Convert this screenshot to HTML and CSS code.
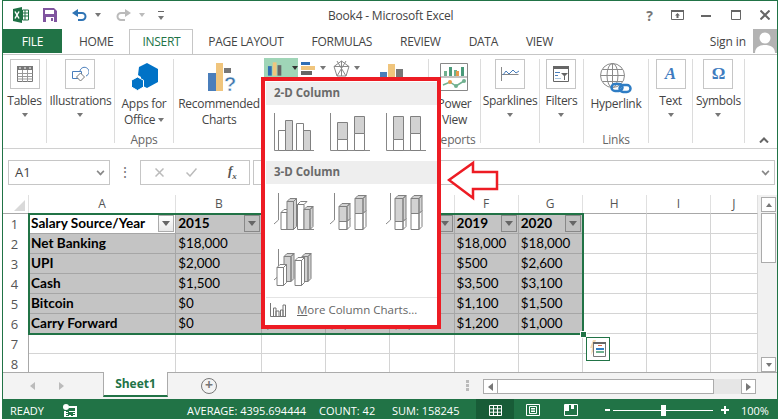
FILE: index.html
```html
<!DOCTYPE html>
<html lang="en">
<head>
    <meta charset="UTF-8">
    <title>Book4 - Microsoft Excel</title>
    <link rel="stylesheet" href="styles.css">
</head>
<body>
<div class="window">

    <!-- title bar -->
    <div class="titlebar">
        <div class="qat">
            <svg class="qat-excel" width="16" height="16" viewBox="0 0 16 16"><path fill="#1e7145" d="M0 2 9 0v16L0 14z"/><path fill="#fff" stroke="#1e7145" d="M9.500 3h6v10h-6z"/><path stroke="#1e7145" d="M12 3v10M9.500 6h6M9.500 9h6"/><path fill="none" stroke="#fff" stroke-width="1.500" d="m2 4.500 4 7m0-7-4 7"/></svg>
            <svg class="qat-save" width="14" height="14" viewBox="0 0 14 14"><path fill="#80559f" d="M0 0h11l3 3v11H0z"/><path fill="#fff" d="M2 2h9v4H2zM3 9h8v5H3z"/><path fill="#80559f" d="M8 10h2v3H8z"/></svg>
            <svg class="qat-undo" width="15" height="13" viewBox="0 0 15 13"><path fill="none" stroke="#2f74b5" stroke-width="2" d="M2 4h8a3.500 3.500 0 0 1 0 7H6"/><path fill="#2f74b5" d="M6 0v8L0 4z"/></svg>
            <span class="caret qat-caret"></span>
            <svg class="qat-redo" width="15" height="13" viewBox="0 0 15 13"><path fill="none" stroke="#bbb" stroke-width="2" d="M13 4H5a3.500 3.500 0 0 0 0 7h4"/><path fill="#bbb" d="M9 0v8l6-4z"/></svg>
            <span class="caret qat-caret light"></span>
            <span class="qat-custom"><span class="caret"></span></span>
        </div>
        <div class="title">Book4 - Microsoft Excel</div>
        <div class="wincontrols">
            <span class="help">?</span>
            <svg width="13" height="10" viewBox="0 0 13 10"><path fill="none" stroke="#666" d="M.5.500h12v9H.500z"/><path fill="#666" d="M0 0h13v2H0zM6.500 3 9 5.500H7.500V8h-2V5.500H4z"/></svg>
            <svg class="wc-min" width="10" height="10" viewBox="0 0 10 10"><path fill="#666" d="M0 5h10v2H0z"/></svg>
            <svg class="wc-max" width="10" height="10" viewBox="0 0 10 10"><path fill="none" stroke="#666" d="M.5.500h9v9h-9z"/><path fill="#666" d="M0 0h10v2H0z"/></svg>
            <svg class="wc-close" width="10" height="10" viewBox="0 0 10 10"><path stroke="#666" stroke-width="2" d="m.5.500 9 9m0-9-9 9"/></svg>
        </div>
    </div>

    <!-- tabs -->
    <div class="tabs">
        <div class="tab file">FILE</div>
        <div class="tab home">HOME</div>
        <div class="tab active">INSERT</div>
        <div class="tab">PAGE LAYOUT</div>
        <div class="tab">FORMULAS</div>
        <div class="tab">REVIEW</div>
        <div class="tab">DATA</div>
        <div class="tab">VIEW</div>
        <div class="signin">Sign in</div>
        <svg class="avatar" width="24" height="24" viewBox="0 0 24 24"><path fill="#b3b3b3" d="M0 0h24v24H0z"/><circle cx="12" cy="9" r="5.500" fill="#fff"/><path fill="#fff" d="M2 24c0-6 5-8 10-8s10 2 10 8z"/></svg>
    </div>

    <!-- ribbon -->
    <div class="ribbon">
        <div class="group w-44">
            <div class="gitems">
                <div class="rbtn">
                    <div class="rbox"><svg width="16" height="16" viewBox="0 0 16 16"><path fill="#fff" stroke="#777" d="M.5.500h15v15H.500z"/><path fill="#777" d="M0 0h16v4H0z"/><path stroke="#999" d="M.5 7.500h15M.5 10.500h15M.5 13h15M5.500 4v12M10.500 4v12"/><path fill="#fff" d="M2 1.500h2v1H2zM7 1.500h2v1H7zM12 1.500h2v1h-2z"/></svg></div>
                    <div class="rlabel">Tables</div>
                    <span class="caret"></span>
                </div>
            </div>
        </div>
        <div class="group w-68">
            <div class="gitems">
                <div class="rbtn">
                    <div class="rbox"><svg width="17" height="16" viewBox="0 0 17 16"><path fill="none" stroke="#4a7ebb" d="M.5 5.500h9v7h-9z"/><path fill="#fff" stroke="#777" d="m8.500 7 4 4-4 4-4-4z"/><path fill="none" stroke="#4a7ebb" d="M8 5a4.500 4.500 0 1 1 6 5"/></svg></div>
                    <div class="rlabel">Illustrations</div>
                    <span class="caret"></span>
                </div>
            </div>
        </div>
        <div class="group w-59">
            <div class="gitems">
                <div class="rbtn tall">
                    <svg class="ic-28" width="27" height="28" viewBox="0 0 27 28"><path fill="#0072c6" d="m16 0 11 6v13l-11 6-6-3v-8l-3-2 1-8z"/><path fill="#0072c6" stroke="#fff" d="m6.500 14 6 3.200v6.800l-6 3.500-6-3.500v-6.800z"/></svg>
                    <div class="rlabel">Apps for<br>Office <span class="caret inline"></span></div>
                </div>
            </div>
            <div class="gname">Apps</div>
        </div>
        <div class="group w-255">
            <div class="gitems">
                <div class="rbtn tall recommended">
                    <svg class="ic-rec" width="30" height="30" viewBox="0 0 30 30"><path fill="#4a7ebb" d="M0 10h8v18H0z"/><path fill="#f0c57d" d="M8 0h7v28H8z"/><path fill="#777" d="M16 5h7v5h-7z"/><text class="qmark" x="16" y="28">?</text></svg>
                    <div class="rlabel">Recommended<br>Charts</div>
                </div>
                <div class="gallery">
                    <div class="gal-item picked">
                        <svg width="22" height="15" viewBox="0 0 22 15"><path fill="#2f6eb5" d="M1 5h4v10H1z"/><path fill="#f0c57d" d="M6 1h4v14H6z"/><path fill="#666" d="M11 4h4v11h-4z"/></svg>
                        <span class="caret dark"></span>
                    </div>
                    <div class="gal-item bars">
                        <svg width="15" height="15" viewBox="0 0 15 15"><path fill="#2f6eb5" d="M0 1h9v3H0z"/><path fill="#f0c57d" d="M0 5h14v4H0z"/><path fill="#666" d="M0 10h11v4H0z"/></svg>
                        <span class="caret"></span>
                    </div>
                    <div class="gal-item radar">
                        <svg width="17" height="17" viewBox="0 0 17 17"><path fill="none" stroke="#888" d="m8.500 1 7.500 5.500-3 9.500H4L1 6.500zM8.500 1v15M1 6.500 16 6.500M4 16 13 1M13 16 4 1"/></svg>
                        <span class="caret"></span>
                    </div>
                    <div class="gal-item combo">
                        <svg width="24" height="20" viewBox="0 0 24 20"><path fill="#4a7ebb" d="M0 8h7v12H0z"/><path fill="#f0c57d" d="M8 0h7v20H8z"/><path fill="#777" d="M16 5h7v15h-7z"/></svg>
                    </div>
                </div>
            </div>
        </div>
        <div class="group w-52">
            <div class="gitems">
                <div class="rbtn tall">
                    <svg class="ic-28" width="28" height="28" viewBox="0 0 28 28"><path fill="#fff" stroke="#888" d="M.5.500h27v27H.500zM.5 14h27"/><path fill="#6fb08f" d="M4 8h3v5H4zM14 7h3v6h-3z"/><path fill="#4a9a7a" d="M9 4h3v9H9zM21 4h3v9h-3z"/><path fill="#e89a4c" d="M16 8h3v5h-3z"/><path fill="none" stroke="#6fb08f" stroke-width="1.500" d="m3 22 7-3 6 4 8-5"/><circle cx="10" cy="19" r="2" fill="#e89a4c"/><circle cx="16" cy="23" r="2" fill="#6fb08f"/><circle cx="24" cy="18" r="2" fill="#6fb08f"/></svg>
                    <div class="rlabel">Power<br>View</div>
                </div>
            </div>
            <div class="gname">Reports</div>
        </div>
        <div class="group w-59">
            <div class="gitems">
                <div class="rbtn">
                    <div class="rbox"><svg width="18" height="14" viewBox="0 0 18 14"><path fill="none" stroke="#888" d="M.5 0v14M.5 7.500h17"/><path fill="none" stroke="#4a7ebb" d="m2 8 3-4 3 3 4-4 3 3 3-2"/></svg></div>
                    <div class="rlabel">Sparklines</div>
                    <span class="caret"></span>
                </div>
            </div>
        </div>
        <div class="group w-44">
            <div class="gitems">
                <div class="rbtn">
                    <div class="rbox"><svg width="16" height="16" viewBox="0 0 16 16"><path fill="#fff" stroke="#666" d="M.5.500h15v15H.500z"/><path fill="#666" d="M0 0h16v3H0zM8 7h7l-3 3v4h-1v-4z"/><path fill="#4a7ebb" d="M2 6h5v1H2zM2 9h3v1H2z"/><path fill="#a8c6e0" d="M2 12h6v1H2z"/></svg></div>
                    <div class="rlabel">Filters</div>
                    <span class="caret"></span>
                </div>
            </div>
        </div>
        <div class="group w-65">
            <div class="gitems">
                <div class="rbtn tall">
                    <svg width="32" height="31" viewBox="0 0 32 31"><g fill="none" stroke="#8a8a8a"><circle cx="12.500" cy="12.500" r="12"/><ellipse cx="12.500" cy="12.500" rx="5.500" ry="12"/><path d="M12.500.5v24M.5 12.500h24M2.500 6.500h20M2.500 18.500h20"/></g><g fill="none" stroke="#2f7dc4" stroke-width="2.500"><rect x="11.500" y="21" width="11" height="7" rx="3.500"/><rect x="19.500" y="22" width="11" height="7" rx="3.500"/></g></svg>
                    <div class="rlabel">Hyperlink</div>
                </div>
            </div>
            <div class="gname">Links</div>
        </div>
        <div class="group w-44">
            <div class="gitems">
                <div class="rbtn">
                    <div class="rbox"><span class="rbox-text">A</span></div>
                    <div class="rlabel">Text</div>
                    <span class="caret"></span>
                </div>
            </div>
        </div>
        <div class="group w-52">
            <div class="gitems">
                <div class="rbtn">
                    <div class="rbox"><span class="rbox-omega">Ω</span></div>
                    <div class="rlabel">Symbols</div>
                    <span class="caret"></span>
                </div>
            </div>
        </div>
        <svg class="collapse" width="10" height="6" viewBox="0 0 10 6"><path fill="none" stroke="#666" stroke-width="2" d="m1 5.500 4-4 4 4"/></svg>
    </div>

    <!-- formula bar -->
    <div class="formulabar">
        <div class="namebox">A1<span class="chev"></span></div>
        <div class="fdots">⋮</div>
        <div class="fbuttons">
            <svg width="9" height="9" viewBox="0 0 9 9"><path stroke="#bbb" stroke-width="1.500" d="m.5.500 8 8m0-8-8 8"/></svg>
            <svg width="11" height="9" viewBox="0 0 11 9"><path fill="none" stroke="#bbb" stroke-width="1.500" d="m.5 4.500 3.500 3.500 6.500-7.500"/></svg>
            <span class="fx">f<sub>x</sub></span>
        </div>
        <div class="finput"><span class="chev"></span></div>
    </div>

    <!-- sheet -->
    <div class="sheetarea">
        <div class="sheetwrap">
            <table class="sheet">
                <colgroup>
                    <col class="c-head"><col class="c-a"><col class="c-b"><col class="c-n"><col class="c-n"><col class="c-n"><col class="c-n"><col class="c-n"><col class="c-n"><col class="c-n"><col class="c-j">
                </colgroup>
                <tr class="hdr"><th class="corner"><span class="tri"></span></th><th>A</th><th>B</th><th></th><th></th><th></th><th>F</th><th>G</th><th>H</th><th>I</th><th>J</th></tr>
                <tr>
                    <th>1</th>
                    <td class="active-cell b">Salary Source/Year<span class="filter light"></span></td>
                    <td class="s b">2015<span class="filter"></span></td>
                    <td class="s b"></td>
                    <td class="s b"></td>
                    <td class="s b"><span class="filter"></span></td>
                    <td class="s b">2019<span class="filter"></span></td>
                    <td class="s b">2020<span class="filter"></span></td>
                    <td></td><td></td><td></td>
                </tr>
                <tr><th>2</th><td class="s b">Net Banking</td><td class="s">$18,000</td><td class="s"></td><td class="s"></td><td class="s"></td><td class="s">$18,000</td><td class="s">$18,000</td><td></td><td></td><td></td></tr>
                <tr><th>3</th><td class="s b">UPI</td><td class="s">$2,000</td><td class="s"></td><td class="s"></td><td class="s"></td><td class="s">$500</td><td class="s">$2,600</td><td></td><td></td><td></td></tr>
                <tr><th>4</th><td class="s b">Cash</td><td class="s">$1,500</td><td class="s"></td><td class="s"></td><td class="s"></td><td class="s">$3,500</td><td class="s">$3,100</td><td></td><td></td><td></td></tr>
                <tr><th>5</th><td class="s b">Bitcoin</td><td class="s">$0</td><td class="s"></td><td class="s"></td><td class="s"></td><td class="s">$1,100</td><td class="s">$1,500</td><td></td><td></td><td></td></tr>
                <tr><th>6</th><td class="s b">Carry Forward</td><td class="s">$0</td><td class="s">$0</td><td class="s">$1,000</td><td class="s">$1,300</td><td class="s">$1,200</td><td class="s">$1,000</td><td></td><td></td><td></td></tr>
                <tr><th>7</th><td></td><td></td><td></td><td></td><td></td><td></td><td></td><td></td><td></td><td></td></tr>
                <tr><th>8</th><td></td><td></td><td></td><td></td><td></td><td></td><td></td><td></td><td></td><td></td></tr>
            </table>
            <div class="range"><span class="handle"></span></div>
            <div class="quick">
                <svg width="20" height="20" viewBox="0 0 20 20"><path fill="#f5d9b0" d="M5 1h3L6 7h2l-5 9 1-7H2z"/><path fill="#fff" stroke="#777" d="M5.500 3.500h12v14h-12z"/><path fill="#666" d="M5 3h13v2H5z"/><path fill="#d9694a" d="M10 6h4v1h-4z"/><path fill="#2f7dc4" d="M8 9h8v2H8z"/><path fill="#6fb08f" d="M8 12h8v2H8z"/></svg>
            </div>
        </div>
        <div class="vscroll">
            <div class="sb-btn"><span class="caret up"></span></div>
            <div class="sb-thumb"></div>
            <div class="sb-rest"></div>
            <div class="sb-btn"><span class="caret"></span></div>
        </div>
    </div>

    <!-- sheet tabs -->
    <div class="sheetbar">
        <span class="nav-l"></span>
        <span class="nav-r"></span>
        <div class="sheettab">Sheet1</div>
        <div class="addsheet">+</div>
        <div class="hdots"></div>
        <div class="hscroll">
            <div class="hs-btn"><span class="tri-l"></span></div>
            <div class="hs-thumb"></div>
            <div class="hs-rest"></div>
            <div class="hs-btn"><span class="tri-r"></span></div>
        </div>
    </div>

    <!-- status bar -->
    <div class="statusbar">
        <span class="st-ready">READY</span>
        <svg class="st-macro" width="14" height="13" viewBox="0 0 14 13"><circle cx="3" cy="3" r="3" fill="#fff"/><path fill="#fff" d="M6 2h8v11H1V7h2v1h2v1H3v1h2v1H3v1h1h2v-1h2v1h2v-1h2v-1h-2V9h2V8H6V7h6V4H6z"/></svg>
        <span class="st-avg">AVERAGE: 4395.694444</span>
        <span class="st-count">COUNT: 42</span>
        <span class="st-sum">SUM: 158245</span>
        <div class="st-view current"><svg width="13" height="11" viewBox="0 0 13 11"><path fill="none" stroke="#fff" d="M.5.500h12v10H.500zM.5 3.800h12M.5 7.200h12M4.500.5v10M8.500.5v10"/></svg></div>
        <div class="st-view"><svg width="14" height="12" viewBox="0 0 14 12"><path fill="none" stroke="#fff" d="M.5.500h13v11H.500zM3.500 2.500h7v7h-7zM5 4.500h4M5 6h4M5 7.500h4"/></svg></div>
        <div class="st-view"><svg width="14" height="12" viewBox="0 0 14 12"><path fill="none" stroke="#fff" d="M.5.500h13v11H.500z"/><path fill="#fff" d="M1 0h4v7H1zM7 0h3v5H7z"/></svg></div>
        <span class="zoom-sign minus"></span>
        <div class="slider"><span class="thumb"></span></div>
        <span class="zoom-sign plus"></span>
        <span class="st-zoom">100%</span>
    </div>

    <!-- chart dropdown, open over the sheet -->
    <div class="dropdown">
        <div class="dd-title">2-D Column</div>
        <div class="dd-row first">
            <svg class="ci" width="40" height="38" viewBox="0 0 40 38"><path class="ax" d="M.5 0v37.500H40"/><path class="w" d="M4.500 17.500h7v20h-7z"/><path class="g" d="M11.500 7.500h7v30h-7z"/><path class="w" d="M22.500 10.500h7v27h-7z"/><path class="g" d="M29.500 17.500h7v20h-7z"/></svg>
            <svg class="ci" width="40" height="38" viewBox="0 0 40 38"><path class="ax" d="M.5 0v37.500H40"/><path class="w" d="M7.500 26.500h10v11h-10zM24.500 20.500h10v17h-10z"/><path class="g" d="M7.500 9.500h10v17h-10zM24.500 3.500h10v17h-10z"/></svg>
            <svg class="ci" width="40" height="38" viewBox="0 0 40 38"><path class="ax" d="M.5 0v37.500H40"/><path class="w" d="M7.500 26.500h10v11h-10zM24.500 20.500h10v17h-10z"/><path class="g" d="M7.500 3.500h10v23h-10zM24.500 3.500h10v17h-10z"/></svg>
        </div>
        <div class="dd-title second">3-D Column</div>
        <div class="dd-row three">
            <svg class="ci" width="40" height="37" viewBox="0 0 40 37"><path class="ax" d="M4.500 0v27M0 31l4.500-4M36 36.500h4"/>
                <path class="w" d="M7 19.500h6v17H7zM7 19.500l3-3h6l-3 3zM23.500 11.500H30v25h-6.500zM23.500 11.500l3-3H33l-3 3z"/>
                <path class="g" d="M13 8.500h6.500v28H13zM13 8.500l3-3h6.500l-3 3zM19.500 8.500l3-3v28l-3 3zM30 16.500h6v20h-6zM30 16.500l3-3h6l-3 3zM36 16.500l3-3v20l-3 3z"/></svg>
            <svg class="ci" width="40" height="37" viewBox="0 0 40 37"><path class="ax" d="M4.500 0v27M0 31l4.500-4"/>
                <path class="w" d="M9 28.500h8v8H9zM25 20.500h8v16h-8zM17 28.500l3-3v8l-3 3zM33 20.500l3-3v16l-3 3z"/>
                <path class="g" d="M9 13.500h8v15H9zM9 13.500l3-3h8l-3 3zM17 13.500l3-3v15l-3 3zM25 5.500h8v15h-8zM25 5.500l3-3h8l-3 3zM33 5.500l3-3v15l-3 3z"/></svg>
            <svg class="ci" width="40" height="37" viewBox="0 0 40 37"><path class="ax" d="M4.500 0v27M0 31l4.500-4"/>
                <path class="w" d="M9 28.500h8v8H9zM25 20.500h8v16h-8zM17 28.500l3-3v8l-3 3zM33 20.500l3-3v16l-3 3z"/>
                <path class="g" d="M9 5.500h8v23H9zM9 5.500l3-3h8l-3 3zM17 5.500l3-3v23l-3 3zM25 5.500h8v15h-8zM25 5.500l3-3h8l-3 3zM33 5.500l3-3v15l-3 3z"/></svg>
        </div>
        <div class="dd-row four">
            <svg class="ci" width="40" height="37" viewBox="0 0 40 37"><path class="ax" d="M4.500 0v27M0 31l4.500-4"/>
                <path class="g" d="M10 7.500h7v25h-7zM10 7.500l3-3h7l-3 3zM17 7.500l3-3v25l-3 3zM28 7.500h6v25h-6zM28 7.500l3-3h6l-3 3zM34 7.500l3-3v25l-3 3z"/>
                <path class="w" d="M3 18.500h6.500v18H3zM3 18.500l3-3h6.500l-3 3zM9.500 18.500l3-3v18l-3 3zM21 11.500h6.500v25H21zM21 11.500l3-3h6.500l-3 3zM27.500 11.500l3-3v25l-3 3z"/></svg>
        </div>
        <div class="dd-more">
            <svg width="16" height="14" viewBox="0 0 16 14"><path fill="none" stroke="#777" d="M.5 0v13.500H16M3.500 13V5h2.500v8M6 13V8h3v5M10.500 13V7H13v6M13 13V2h2.500v11"/></svg>
            <span class="dd-more-text"><u>M</u>ore Column Charts...</span>
        </div>
    </div>

    <!-- red call-out arrow -->
    <svg class="callout" width="54" height="41" viewBox="0 0 54 41"><path fill="#fff" stroke="#ed1c24" stroke-width="2.500" d="M2 20 26 3v9h24v17H26v9z"/></svg>
</div>
</body>
</html>
```

FILE: styles.css
```css
* {
    box-sizing: border-box;
}

body {
    margin: 0;
    overflow: hidden;
    background: #fff;
    font-family: "Open Sans", sans-serif;
    color: #444;
}

.window {
    position: relative;
    margin-left: 2px;
    width: 776px;
    height: 419px;
    overflow: hidden;
    display: flex;
    flex-direction: column;
    border: 1px solid #217346;
    border-bottom: 0;
    background: #fff;
}

.caret {
    display: inline-block;
    width: 0;
    height: 0;
    border-left: 3.5px solid transparent;
    border-right: 3.5px solid transparent;
    border-top: 4px solid #777;
}

.caret.light {
    border-top-color: #bbb;
}

.caret.dark {
    border-top-color: #333;
}

.caret.up {
    border-top: 0;
    border-bottom: 4px solid #777;
}

/* title bar */
.titlebar {
    flex: 0 0 28px;
    display: flex;
    align-items: center;
    position: relative;
}

.qat {
    display: flex;
    align-items: center;
    padding-left: 10px;
}

.qat-save {
    margin-left: 14px;
}

.qat-undo {
    margin-left: 15px;
}

.qat-caret {
    margin-left: 8px;
}

.qat-redo {
    margin-left: 15px;
}

.qat-custom {
    margin-left: 13px;
    border-top: 1px solid #666;
    padding-top: 2px;
    line-height: 0;
}

.title {
    position: absolute;
    left: 325px;
    font-size: 12px;
    letter-spacing: -0.2px;
}

.wincontrols {
    margin-left: auto;
    display: flex;
    align-items: center;
}

.help {
    font-weight: 700;
    font-size: 14px;
    color: #777;
    margin-right: 18px;
}

.wc-min {
    margin-left: 17px;
}

.wc-max {
    margin-left: 20px;
}

.wc-close {
    margin-left: 19px;
    margin-right: 7px;
}

/* tabs */
.tabs {
    flex: 0 0 24px;
    display: flex;
    align-items: stretch;
    border-bottom: 1px solid #c6c6c6;
    font-size: 12px;
}

.tab {
    padding: 0 14px;
    line-height: 25px;
    white-space: nowrap;
    letter-spacing: -0.3px;
}

.tab.file {
    width: 59px;
    padding: 0;
    text-align: center;
    background: #217346;
    color: #fff;
    height: 24px;
}

.tab.home {
    margin-left: 3px;
}

.tab.active {
    height: 25px;
    margin: 0 1px 0 2px;
    padding: 0 12px;
    background: #fff;
    border: 1px solid #c6c6c6;
    border-bottom: 0;
    color: #217346;
    line-height: 24px;
}

.signin {
    margin-left: auto;
    line-height: 25px;
    margin-right: 7px;
    letter-spacing: -0.1px;
}

.avatar {
    flex: none;
}

/* ribbon */
.ribbon {
    flex: 0 0 94px;
    display: flex;
    align-items: flex-start;
    padding-top: 4px;
    border-bottom: 1px solid #d0d0d0;
    position: relative;
}

.group {
    height: 84px;
    display: flex;
    flex-direction: column;
    border-right: 1px solid #dcdcdc;
    font-size: 12px;
}

.w-44 { width: 44px; }
.w-52 { width: 52px; }
.w-59 { width: 59px; }
.w-65 { width: 65px; }
.w-68 { width: 68px; }
.w-255 { width: 255px; }

.gitems {
    flex: 1;
    display: flex;
    justify-content: center;
    min-height: 0;
}

.gname {
    flex: none;
    height: 15px;
    margin-bottom: -4px;
    line-height: 15px;
    text-align: center;
    color: #666;
    letter-spacing: -0.2px;
}

.rbtn {
    display: flex;
    flex-direction: column;
    align-items: center;
    white-space: nowrap;
}

.rbtn.tall {
    padding-top: 4px;
}

.rbtn.tall svg {
    flex: none;
    overflow: visible;
}

.rbox {
    width: 30px;
    height: 30px;
    border: 1px solid #c6c6c6;
    display: flex;
    align-items: center;
    justify-content: center;
    flex: none;
}

.rbox-text {
    font-family: "Liberation Serif", serif;
    font-weight: 700;
    font-style: italic;
    font-size: 17px;
    color: #3f7cbf;
}

.rbox-omega {
    font-family: "Liberation Serif", serif;
    font-weight: 700;
    font-size: 17px;
    color: #3f7cbf;
}

.rlabel {
    margin-top: 4px;
    line-height: 16px;
    text-align: center;
    letter-spacing: -0.3px;
    margin-bottom: 4px;
}

.tall .rlabel {
    margin-top: 2px;
    margin-bottom: 0;
}

.ic-28 {
    margin-bottom: 3px;
}

.ic-rec {
    margin-left: 7px;
    margin-bottom: 1px;
}

.rlabel .caret.inline {
    vertical-align: 2px;
}

.recommended {
    width: 90px;
}

.w-255 .gitems {
    justify-content: flex-start;
}

.gallery {
    display: flex;
    align-items: flex-start;
    margin-top: -1px;
}

.gal-item {
    display: flex;
    align-items: center;
    height: 20px;
    gap: 4px;
}

.gal-item.picked {
    width: 34px;
    padding-left: 3px;
    background: #9fd5b7;
}

.gal-item.bars {
    margin-left: 3px;
}

.gal-item.radar {
    margin-left: 7px;
}

.gal-item.combo {
    margin-left: 20px;
    height: 26px;
    padding-top: 6px;
}

.qmark {
    font-family: "Liberation Sans", sans-serif;
    font-weight: 700;
    font-size: 20px;
    fill: #3f76ad;
    stroke: #fff;
    stroke-width: 0.5px;
}

.collapse {
    position: absolute;
    right: 8px;
    bottom: 5px;
}

/* formula bar */
.formulabar {
    flex: 0 0 46px;
    display: flex;
    align-items: flex-start;
    padding: 11px 2px 0 5px;
}

.namebox {
    width: 102px;
    height: 25px;
    border: 1px solid #c6c6c6;
    font-size: 13px;
    line-height: 22px;
    padding-left: 6px;
    position: relative;
}

.chev {
    position: absolute;
    right: 5px;
    top: 7px;
    width: 7px;
    height: 7px;
    border-right: 2px solid #888;
    border-bottom: 2px solid #888;
    transform: rotate(45deg) scale(0.8);
}

.fdots {
    width: 30px;
    text-align: center;
    font-size: 14px;
    line-height: 24px;
    color: #777;
}

.fbuttons {
    width: 110px;
    height: 25px;
    border: 1px solid #c6c6c6;
    display: flex;
    align-items: center;
    padding-left: 14px;
    gap: 22px;
}

.fx {
    margin-left: 9px;
    font-family: "Liberation Serif", serif;
    font-style: italic;
    font-weight: 700;
    font-size: 13px;
    color: #555;
    line-height: 1;
}

.fx sub {
    font-size: 9px;
}

.finput {
    flex: 1;
    margin-left: 3px;
    height: 25px;
    border: 1px solid #c6c6c6;
    position: relative;
}

/* sheet */
.sheetarea {
    flex: 0 0 177px;
    display: flex;
    overflow: hidden;
}

.sheetwrap {
    position: relative;
    width: 755px;
    flex: none;
}

.sheet {
    border-collapse: separate;
    border-spacing: 0;
    table-layout: fixed;
    width: 755px;
    font-family: Lato, sans-serif;
    font-size: 13.4px;
    color: #000;
}

.c-head { width: 26px; }
.c-a { width: 147px; }
.c-b { width: 86px; }
.c-n { width: 64px; }
.c-j { width: 47px; }

.sheet tr {
    height: 20px;
}

.sheet tr.hdr {
    height: 19px;
}

.sheet th {
    font-family: "Open Sans", sans-serif;
    font-weight: 400;
    font-size: 12px;
    color: #555;
    padding: 0;
    text-align: center;
    border-right: 1px solid #d4d4d4;
    border-bottom: 1px solid #d4d4d4;
}

.sheet tr > th:first-child {
    border-right: 1px solid #a8a8a8;
    border-bottom: 0;
    font-size: 13px;
    padding-right: 2px;
}

.sheet tr.hdr th {
    border-bottom: 1px solid #a8a8a8;
    border-right: 1px solid #e0e0e0;
    line-height: 17px;
    vertical-align: top;
}

.corner {
    position: relative;
}

.tri {
    position: absolute;
    right: 3px;
    bottom: 2px;
    width: 0;
    height: 0;
    border-left: 11px solid transparent;
    border-bottom: 11px solid #d9d9d9;
}

.sheet td {
    position: relative;
    padding: 0 0 0 2px;
    height: 20px;
    line-height: 19px;
    border-right: 1px solid #d4d4d4;
    border-bottom: 1px solid #d4d4d4;
    white-space: nowrap;
    overflow: hidden;
}

.sheet td.s {
    background: #c4c4c4;
    border-color: #a6a6a6;
}

.sheet td.b {
    font-weight: 700;
    font-size: 13.6px;
}

.sheet td.active-cell {
    border-color: #a6a6a6;
}

.filter {
    position: absolute;
    right: 1px;
    top: 1px;
    width: 16px;
    height: 17px;
    border: 1px solid #888;
    background: #c0c0c0;
}

.filter.light {
    background: linear-gradient(#fff, #e8e8e8);
    border-color: #ababab;
}

.filter::after {
    content: "";
    position: absolute;
    left: 3px;
    top: 5px;
    border-left: 4px solid transparent;
    border-right: 4px solid transparent;
    border-top: 5px solid #666;
}

.range {
    position: absolute;
    left: 25px;
    top: 18px;
    width: 556px;
    height: 122px;
    border: 2px solid #217346;
}

.handle {
    position: absolute;
    right: -5px;
    bottom: -5px;
    box-sizing: content-box;
    width: 5px;
    height: 5px;
    background: #217346;
    border: 1px solid #fff;
}

.quick {
    position: absolute;
    left: 583px;
    top: 142px;
    width: 24px;
    height: 24px;
    border: 1px solid #217346;
    background: #fff;
    display: flex;
    align-items: center;
    justify-content: center;
}

.vscroll {
    flex: 1;
    display: flex;
    flex-direction: column;
    background: #f1f1f1;
    padding: 2px 1px 0 3px;
}

.sb-btn {
    flex: none;
    height: 15px;
    background: #fff;
    border: 1px solid #ababab;
    display: flex;
    align-items: center;
    justify-content: center;
}

.sb-thumb {
    flex: none;
    height: 50px;
    background: #fff;
    border: 1px solid #ababab;
    margin-top: 1px;
}

.sb-rest {
    flex: 1;
}

/* sheet tabs */
.sheetbar {
    flex: 0 0 27px;
    display: flex;
    align-items: flex-start;
    background: #f3f3f3;
    border-top: 1px solid #ababab;
    position: relative;
}

.nav-l,
.nav-r {
    margin-top: 9px;
    width: 0;
    height: 0;
    border-top: 4px solid transparent;
    border-bottom: 4px solid transparent;
}

.nav-l {
    margin-left: 27px;
    border-right: 5px solid #bbb;
}

.nav-r {
    margin-left: 24px;
    border-left: 5px solid #bbb;
}

.sheettab {
    margin-left: 39px;
    margin-top: -1px;
    width: 65px;
    height: 25px;
    background: #fff;
    border: 1px solid #ababab;
    border-top: 0;
    border-bottom: 2px solid #217346;
    text-align: center;
    font-weight: 700;
    font-size: 12px;
    line-height: 24px;
    color: #217346;
}

.addsheet {
    margin-left: 33px;
    margin-top: 5px;
    width: 16px;
    height: 16px;
    border: 1.5px solid #777;
    border-radius: 50%;
    text-align: center;
    font-size: 14px;
    font-weight: 700;
    line-height: 12px;
    color: #777;
}

.hdots {
    margin-left: 249px;
    margin-top: 7px;
    width: 3px;
    height: 11px;
    background: repeating-linear-gradient(#bbb 0 3px, transparent 3px 4px);
}

.hscroll {
    margin-left: 14px;
    margin-top: 6px;
    width: 273px;
    height: 15px;
    display: flex;
    background: #e6e6e6;
}

.hs-btn {
    flex: none;
    width: 15px;
    height: 15px;
    background: #fff;
    border: 1px solid #ababab;
    display: flex;
    align-items: center;
    justify-content: center;
}

.hs-thumb {
    flex: none;
    width: 216px;
    background: #fff;
    border: 1px solid #ababab;
    border-left: 0;
}

.hs-rest {
    flex: 1;
}

.tri-l,
.tri-r {
    width: 0;
    height: 0;
    border-top: 4px solid transparent;
    border-bottom: 4px solid transparent;
}

.tri-l {
    border-right: 5px solid #777;
}

.tri-r {
    border-left: 5px solid #777;
}

/* status bar */
.statusbar {
    flex: 0 0 22px;
    display: flex;
    align-items: center;
    background: #217346;
    color: #fff;
    font-size: 11px;
    white-space: nowrap;
}

.st-ready {
    margin-left: 7px;
    width: 53px;
}

.st-macro {
    flex: none;
}

.st-avg {
    margin-left: 110px;
    width: 132px;
}

.st-count {
    width: 73px;
}

.st-sum {
    width: 84px;
}

.st-view {
    height: 22px;
    width: 38px;
    display: flex;
    align-items: center;
    justify-content: center;
}

.st-view.current {
    background: #185c37;
}

.zoom-sign {
    position: relative;
    width: 5px;
    height: 2px;
    background: #fff;
    margin-left: 15px;
}

.zoom-sign.plus {
    width: 8px;
    margin-left: 8px;
}

.zoom-sign.plus::after {
    content: "";
    position: absolute;
    left: 3px;
    top: -3px;
    width: 2px;
    height: 8px;
    background: #fff;
}

.slider {
    position: relative;
    margin-left: 3px;
    width: 100px;
    height: 1px;
    background: #fff;
}

.thumb {
    position: absolute;
    left: 48px;
    top: -5px;
    width: 5px;
    height: 11px;
    background: #fff;
}

.st-zoom {
    margin-left: 12px;
}

/* chart dropdown */
.dropdown {
    position: absolute;
    left: 258px;
    top: 76px;
    width: 180px;
    height: 252px;
    background: #fff;
    border: 4px solid #ed1c24;
    padding: 1px 0 0 1px;
    display: flex;
    flex-direction: column;
}

.dd-title {
    flex: none;
    height: 23px;
    background: #eee;
    padding-left: 8px;
    font-size: 11.5px;
    font-weight: 700;
    line-height: 22px;
    color: #6a6a6a;
}

.dd-row {
    flex: none;
    display: flex;
    gap: 16px;
    padding-left: 8px;
}

.dd-row.first {
    height: 56px;
    padding-top: 8px;
}

.dd-row.three {
    height: 65px;
    padding-top: 9px;
}

.dd-row.four {
    height: 48px;
}

.ci {
    flex: none;
}

.ci .ax {
    fill: none;
    stroke: #888;
}

.ci .w {
    fill: #fff;
    stroke: #808080;
}

.ci .g {
    fill: #d2d2d2;
    stroke: #808080;
}

.dd-more {
    flex: 1;
    border-top: 1px solid #e4e4e4;
    padding: 0 0 4px 4px;
    display: flex;
    align-items: center;
}

.dd-more-text {
    margin-left: 11px;
    font-size: 11.5px;
    color: #666;
}

.callout {
    position: absolute;
    left: 444px;
    top: 159px;
}
```
